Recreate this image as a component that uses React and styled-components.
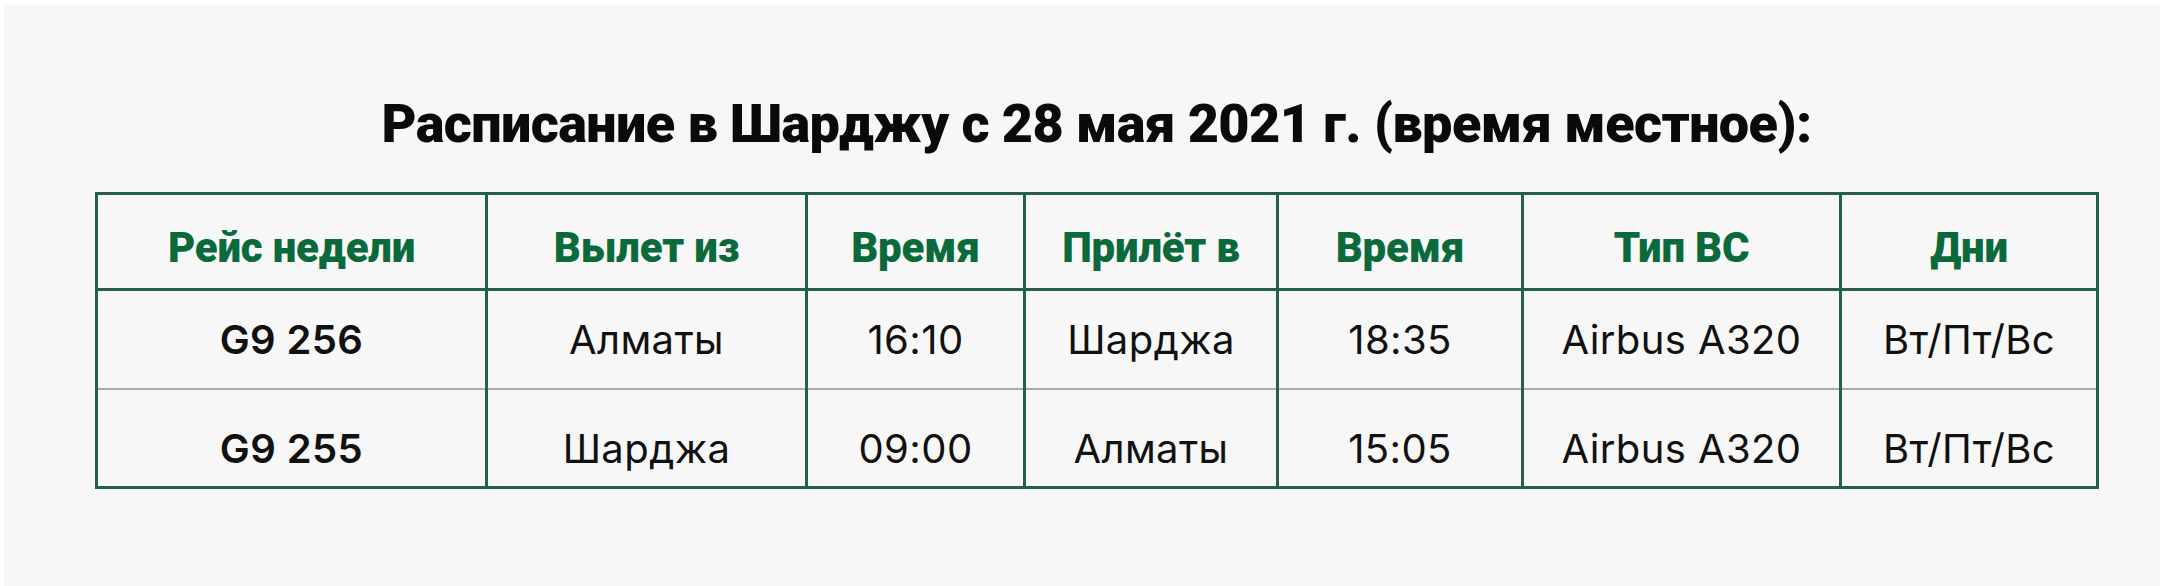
import React from "react";
import styled, { createGlobalStyle } from "styled-components";

const Global = createGlobalStyle`
  html, body { margin: 0; padding: 0; background: #ffffff; }
  #root { width: 2160px; height: 586px; }
`;

const Panel = styled.div`
  margin: 5px 0 0 4px;
  height: 581px;
  background: #f7f7f7;
  box-sizing: border-box;
  padding: 0 0 0 91px;
  display: flex;
  flex-direction: column;
  align-items: flex-start;
`;

const Title = styled.h2`
  margin: 89px 0 0 0;
  width: 2003px;
  text-align: center;
  font-family: Roboto, "Liberation Sans", sans-serif;
  font-weight: 900;
  font-size: 54px;
  line-height: 60px;
  letter-spacing: -0.6px;
  color: #0a0a0a;
`;

const Table = styled.table`
  margin-top: 38px;
  border-collapse: collapse;
  table-layout: fixed;
  width: 2003px;
  border: 3px solid #24604a;
`;

const Col = styled.col``;

const HeadCell = styled.th`
  height: 96px;
  padding: 12px 0 0 0;
  box-sizing: border-box;
  border-left: 3px solid #24604a;
  border-bottom: 3px solid #24604a;
  font-family: Roboto, "Liberation Sans", sans-serif;
  font-weight: 900;
  font-size: 42px;
  letter-spacing: -0.2px;
  color: #0b6a3b;
  text-align: center;
  vertical-align: middle;
`;

const Row = styled.tr`
  & + & td { border-top: 2px solid #a9aca9; }
`;

const Cell = styled.td`
  height: ${(p) => p.$h}px;
  padding: ${(p) => p.$pt}px 0 0 0;
  box-sizing: border-box;
  border-left: 3px solid #24604a;
  font-family: Inter, "Liberation Sans", sans-serif;
  font-weight: ${(p) => (p.$strong ? 600 : 400)};
  font-size: 40px;
  letter-spacing: 0.4px;
  color: #111111;
  text-align: center;
  vertical-align: middle;
`;

const widths = [390, 320, 218, 253, 245, 318, 257];
const heads = ["Рейс недели", "Вылет из", "Время", "Прилёт в", "Время", "Тип ВС", "Дни"];
const rows = [
  ["G9 256", "Алматы", "16:10", "Шарджа", "18:35", "Airbus A320", "Вт/Пт/Вс"],
  ["G9 255", "Шарджа", "09:00", "Алматы", "15:05", "Airbus A320", "Вт/Пт/Вс"],
];

export default function App() {
  return (
    <>
      <Global />
      <Panel>
        <Title>Расписание в Шарджу с 28 мая 2021 г. (время местное):</Title>
        <Table>
          <colgroup>
            {widths.map((w, i) => (
              <Col key={i} style={{ width: w }} />
            ))}
          </colgroup>
          <thead>
            <tr>
              {heads.map((h, i) => (
                <HeadCell key={i}>{h}</HeadCell>
              ))}
            </tr>
          </thead>
          <tbody>
            {rows.map((r, ri) => (
              <Row key={ri}>
                {r.map((c, ci) => (
                  <Cell key={ci} $strong={ci === 0} $h={99} $pt={ri === 0 ? 0 : 22}>
                    {c}
                  </Cell>
                ))}
              </Row>
            ))}
          </tbody>
        </Table>
      </Panel>
    </>
  );
}
